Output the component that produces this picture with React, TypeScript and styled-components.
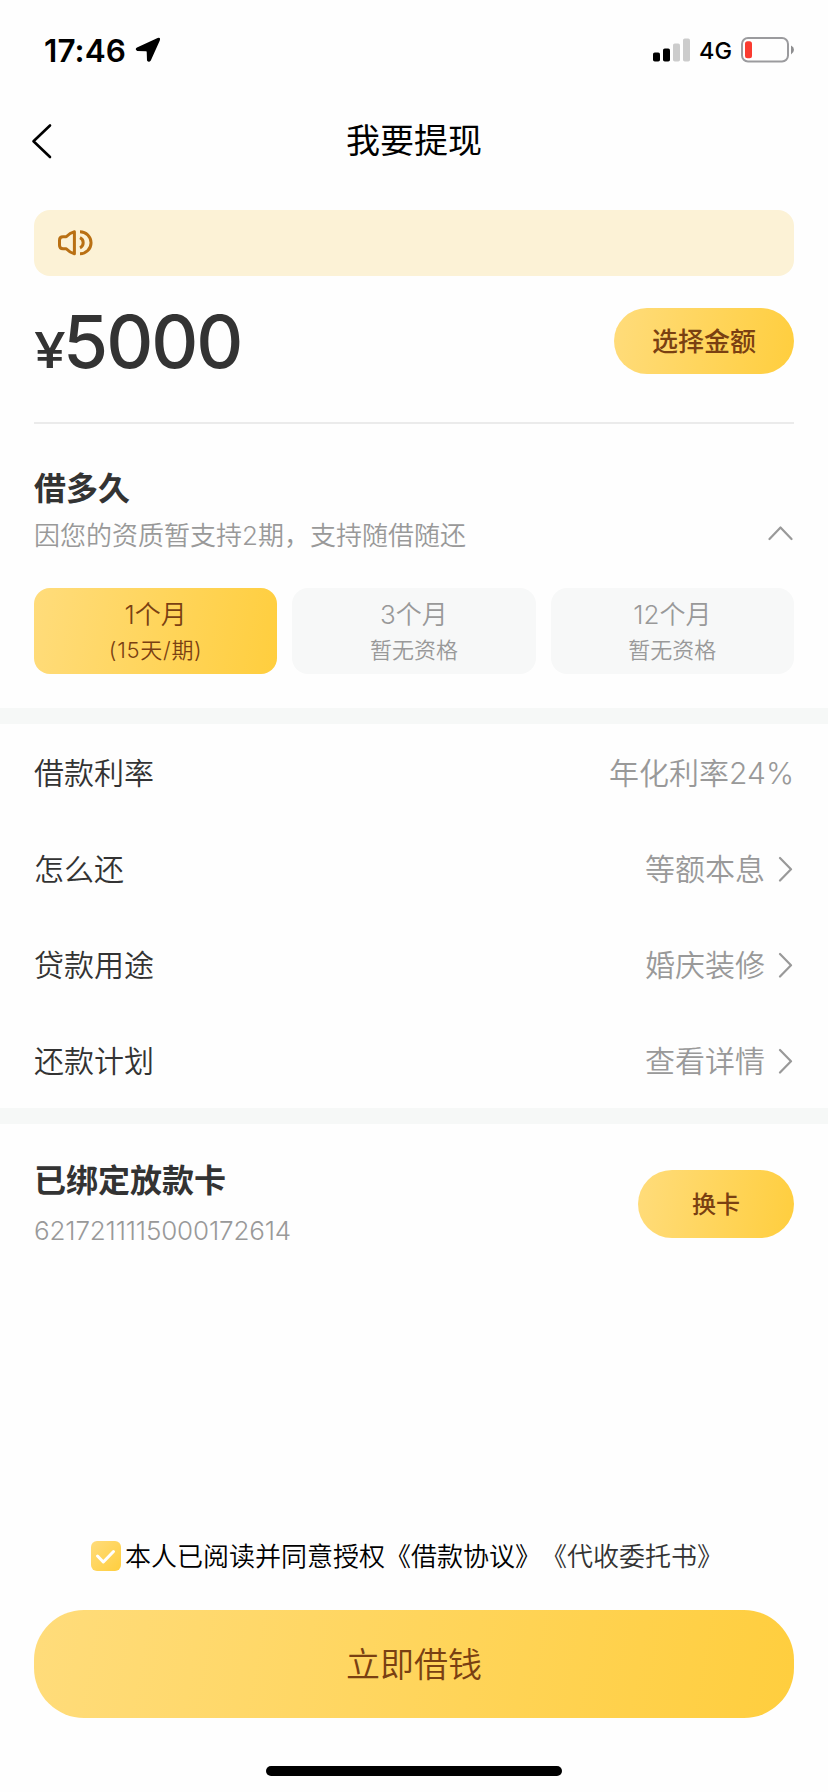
import React from 'react';
import styled, { createGlobalStyle } from 'styled-components';

const GlobalStyle = createGlobalStyle`
  * { box-sizing: border-box; }
  html, body { margin: 0; padding: 0; background: #fff; }
  body {
    font-family: Inter, "Noto Sans CJK SC", sans-serif;
    text-spacing-trim: space-all;
    color: #333;
  }
  button { font-family: inherit; border: 0; margin: 0; padding: 0; }
`;

const gold = 'linear-gradient(100deg, #ffdc7b 0%, #ffce3e 100%)';

const Screen = styled.div`
  display: flex;
  flex-direction: column;
  width: 828px;
  height: 1792px;
  overflow: hidden;
  background: #fefefe;
`;

const StatusBar = styled.div`
  display: flex;
  justify-content: space-between;
  height: 88px;
  padding: 12px 34px 0 44px;
  color: #000;
`;

const StatusGroup = styled.div`
  display: flex;
  align-items: center;
  height: 76px;
`;

const Clock = styled.span`
  width: 83px;
  font-size: 31.5px;
  font-weight: 600;
  letter-spacing: 0.1px;
  white-space: nowrap;
`;

const Network = styled.span`
  width: 33px;
  margin: 1px 9px 0 9px;
  font-size: 23.5px;
  font-weight: 500;
  letter-spacing: 0;
  white-space: nowrap;
`;

const NavBar = styled.header`
  display: grid;
  grid-template-columns: 100px 1fr 100px;
  align-items: center;
  height: 104px;
  padding: 2px 31px 0;
  color: #000;
`;

const NavTitle = styled.h1`
  margin: 0;
  text-align: center;
  font-size: 34px;
  font-weight: 400;
  line-height: 48px;
`;

const Notice = styled.div`
  display: flex;
  align-items: center;
  height: 66px;
  margin: 18px 34px 0;
  padding-left: 23px;
  border-radius: 16px;
  background: #fcf2d6;
`;

const AmountRow = styled.section`
  display: flex;
  align-items: center;
  justify-content: space-between;
  height: 148px;
  margin: 0 34px;
  padding-bottom: 16px;
  border-bottom: 2px solid #ebebeb;
`;

const Amount = styled.div`
  display: flex;
  align-items: baseline;
  padding-top: 10px;
  font-weight: 500;
  line-height: 90px;
`;

const Currency = styled.span`
  width: 29px;
  font-size: 50px;
  transform: scaleX(1.14);
  transform-origin: 0 50%;
`;

const AmountValue = styled.span`
  font-size: 73px;
  letter-spacing: -2px;
`;

const PillButton = styled.button<{ $w: number; $h: number; $size: number }>`
  width: ${p => p.$w}px;
  height: ${p => p.$h}px;
  padding-bottom: 3px;
  border-radius: ${p => p.$h / 2}px;
  background: ${gold};
  color: #7a4012;
  font-size: ${p => p.$size}px;
  font-weight: 500;
`;

const TermSection = styled.section`
  height: 284px;
  padding: 43px 34px 0;
`;

const SectionTitle = styled.h2`
  margin: 0;
  font-size: 32px;
  font-weight: 600;
  line-height: 44px;
`;

const TermHint = styled.div`
  display: flex;
  align-items: center;
  justify-content: space-between;
  height: 36px;
  margin-top: 4px;
  padding-right: 1px;
  color: #999;
  font-size: 26px;
  font-weight: 350;
`;

const TermList = styled.div`
  display: grid;
  grid-template-columns: repeat(3, 1fr);
  gap: 15px;
  margin-top: 37px;
`;

const TermCard = styled.div<{ $active?: boolean }>`
  display: flex;
  flex-direction: column;
  align-items: center;
  height: 86px;
  padding-top: 9px;
  border-radius: 16px;
  background: ${p => (p.$active ? gold : '#f7f8f8')};
  color: ${p => (p.$active ? '#7a4012' : '#999')};
  font-weight: 350;
`;

const TermName = styled.span`
  font-size: 26px;
  line-height: 36px;
`;

const TermNote = styled.span<{ $wide?: boolean }>`
  font-size: 22px;
  line-height: 34px;
  letter-spacing: ${p => (p.$wide ? 0.7 : 0)}px;
`;

const Band = styled.div`
  height: 16px;
  background: #f6f8f7;
`;

const DetailRow = styled.div`
  display: flex;
  align-items: center;
  justify-content: space-between;
  height: 96px;
  padding: 0 34px 2px;
  font-size: 30px;
  font-weight: 350;
`;

const DetailValue = styled.span`
  display: flex;
  align-items: center;
  gap: 13px;
  color: #999;

  svg {
    margin: 4px 1px 0 0;
  }
`;

const CardSection = styled.section`
  display: flex;
  justify-content: space-between;
  padding: 35px 34px 0;
`;

const CardAction = styled.div`
  padding-top: 11px;
`;

const CardNumber = styled.div`
  margin-top: 10px;
  color: #999;
  font-size: 26px;
  font-weight: 350;
  letter-spacing: -0.15px;
  line-height: 36px;
`;

const Footer = styled.footer`
  display: flex;
  flex-direction: column;
  align-items: center;
  margin-top: auto;
  padding: 0 34px 16px;
`;

const Agreement = styled.div`
  display: flex;
  align-items: center;
  align-self: flex-start;
  height: 36px;
  margin-left: 57px;
  color: #000;
  font-size: 26px;
  font-weight: 350;
  white-space: nowrap;
`;

const AgreementText = styled.span`
  padding-bottom: 3px;
`;

const CheckBox = styled.span`
  display: flex;
  width: 30px;
  height: 30px;
  margin-right: 4px;
  border-radius: 6px;
  background: linear-gradient(135deg, #ffdc7b, #ffce3e);
`;

const AgreementLink = styled.span`
  color: #333;
`;

const SubmitButton = styled.button`
  width: 760px;
  height: 108px;
  margin-top: 36px;
  padding-bottom: 4px;
  border-radius: 50px;
  background: ${gold};
  color: #7a4012;
  font-size: 34px;
  font-weight: 350;
`;

const HomeIndicator = styled.div`
  width: 296px;
  height: 10px;
  margin-top: 48px;
  border-radius: 5px;
  background: #000;
`;

const LocationIcon = () => (
  <svg width="26" height="26" viewBox="0 0 26 26" style={{ marginLeft: 8 }}>
    <path
      d="M2 10.6 22.6 1Q25.8 0 24.8 3.4L15.8 23.4Q14 26.2 12 23.6L11.7 14.8Q11.7 14.2 11 14.2L2.2 13.9Q-.6 12.4 2 10.6Z"
      fill="#000"
    />
  </svg>
);

const SignalIcon = () => (
  <svg width="37" height="24" viewBox="0 0 37 24">
    <rect x="0" y="14.5" width="7" height="9" rx="1.8" fill="#000" />
    <rect x="10" y="10.5" width="7" height="13" rx="1.8" fill="#000" />
    <rect x="20" y="5.5" width="7" height="18" rx="1.8" fill="#ccc" />
    <rect x="30" y=".5" width="7" height="23" rx="1.8" fill="#ccc" />
  </svg>
);

const BatteryIcon = () => (
  <svg width="53" height="26" viewBox="0 0 53 26">
    <rect x="1" y="1" width="46" height="23.5" rx="6" fill="none" stroke="#9b9b9e" strokeWidth="2" />
    <rect x="4" y="4.3" width="7" height="17" rx="2.5" fill="#fa3b30" />
    <path d="M50 8.5Q53 10 53 12.8T50 17.5Z" fill="#8e8e90" />
  </svg>
);

const BackIcon = () => (
  <svg width="22" height="36" viewBox="0 0 22 36">
    <path d="M19 2.5 2.5 18.3 19 34" fill="none" stroke="#000" strokeWidth="2.6" strokeLinecap="round" strokeLinejoin="round" />
  </svg>
);

const SpeakerIcon = () => (
  <svg width="36" height="28" viewBox="0 0 36 28" fill="none" stroke="#b97013" strokeWidth="3">
    <path d="M17.4 2.8V24.8Q13 23.8 9.2 19.8H6Q2.5 19.8 2.5 16.3V11.2Q2.5 7.7 6 7.7H9.2Q13 3.8 17.4 2.8Z" strokeLinejoin="round" />
    <path d="M23 2.7A11 11 0 0 1 23 24.8" />
    <path d="M23 8.7A5.6 5.6 0 0 1 23 18.8" />
  </svg>
);

const ChevronUp = () => (
  <svg width="25" height="16" viewBox="0 0 25 16">
    <path d="M1.5 14 12.5 2.5 23.5 14" fill="none" stroke="#999" strokeWidth="2.2" strokeLinecap="round" strokeLinejoin="round" />
  </svg>
);

const ChevronRight = () => (
  <svg width="15" height="26" viewBox="0 0 15 26">
    <path d="M2 2 13 13.2 2 24.5" fill="none" stroke="#999" strokeWidth="2.2" strokeLinecap="round" strokeLinejoin="round" />
  </svg>
);

const CheckIcon = () => (
  <svg width="30" height="30" viewBox="0 0 30 30">
    <path d="M6.5 15 12.3 21 22.5 10.5" fill="none" stroke="#fff" strokeWidth="3" strokeLinecap="round" strokeLinejoin="round" />
  </svg>
);

const terms = [
  { name: '1个月', note: '(15天/期)', active: true },
  { name: '3个月', note: '暂无资格' },
  { name: '12个月', note: '暂无资格' },
];

const details = [
  { label: '借款利率', value: '年化利率24%', link: false },
  { label: '怎么还', value: '等额本息', link: true },
  { label: '贷款用途', value: '婚庆装修', link: true },
  { label: '还款计划', value: '查看详情', link: true },
];

export default function App() {
  return (
    <Screen>
      <GlobalStyle />
      <StatusBar>
        <StatusGroup>
          <Clock>17:46</Clock>
          <LocationIcon />
        </StatusGroup>
        <StatusGroup>
          <SignalIcon />
          <Network>4G</Network>
          <BatteryIcon />
        </StatusGroup>
      </StatusBar>
      <NavBar>
        <BackIcon />
        <NavTitle>我要提现</NavTitle>
      </NavBar>
      <Notice>
        <SpeakerIcon />
      </Notice>
      <AmountRow>
        <Amount>
          <Currency>¥</Currency>
          <AmountValue>5000</AmountValue>
        </Amount>
        <PillButton $w={180} $h={66} $size={26}>选择金额</PillButton>
      </AmountRow>
      <TermSection>
        <SectionTitle>借多久</SectionTitle>
        <TermHint>
          <span>因您的资质暂支持2期，支持随借随还</span>
          <ChevronUp />
        </TermHint>
        <TermList>
          {terms.map(t => (
            <TermCard key={t.name} $active={t.active}>
              <TermName>{t.name}</TermName>
              <TermNote $wide={t.active}>{t.note}</TermNote>
            </TermCard>
          ))}
        </TermList>
      </TermSection>
      <Band />
      {details.map(d => (
        <DetailRow key={d.label}>
          <span>{d.label}</span>
          <DetailValue>
            {d.value}
            {d.link && <ChevronRight />}
          </DetailValue>
        </DetailRow>
      ))}
      <Band />
      <CardSection>
        <div>
          <SectionTitle>已绑定放款卡</SectionTitle>
          <CardNumber>6217211115000172614</CardNumber>
        </div>
        <CardAction>
          <PillButton $w={156} $h={68} $size={24}>换卡</PillButton>
        </CardAction>
      </CardSection>
      <Footer>
        <Agreement>
          <CheckBox>
            <CheckIcon />
          </CheckBox>
          <AgreementText>
            本人已阅读并同意授权《借款协议》
            <AgreementLink>《代收委托书》</AgreementLink>
          </AgreementText>
        </Agreement>
        <SubmitButton>立即借钱</SubmitButton>
        <HomeIndicator />
      </Footer>
    </Screen>
  );
}
